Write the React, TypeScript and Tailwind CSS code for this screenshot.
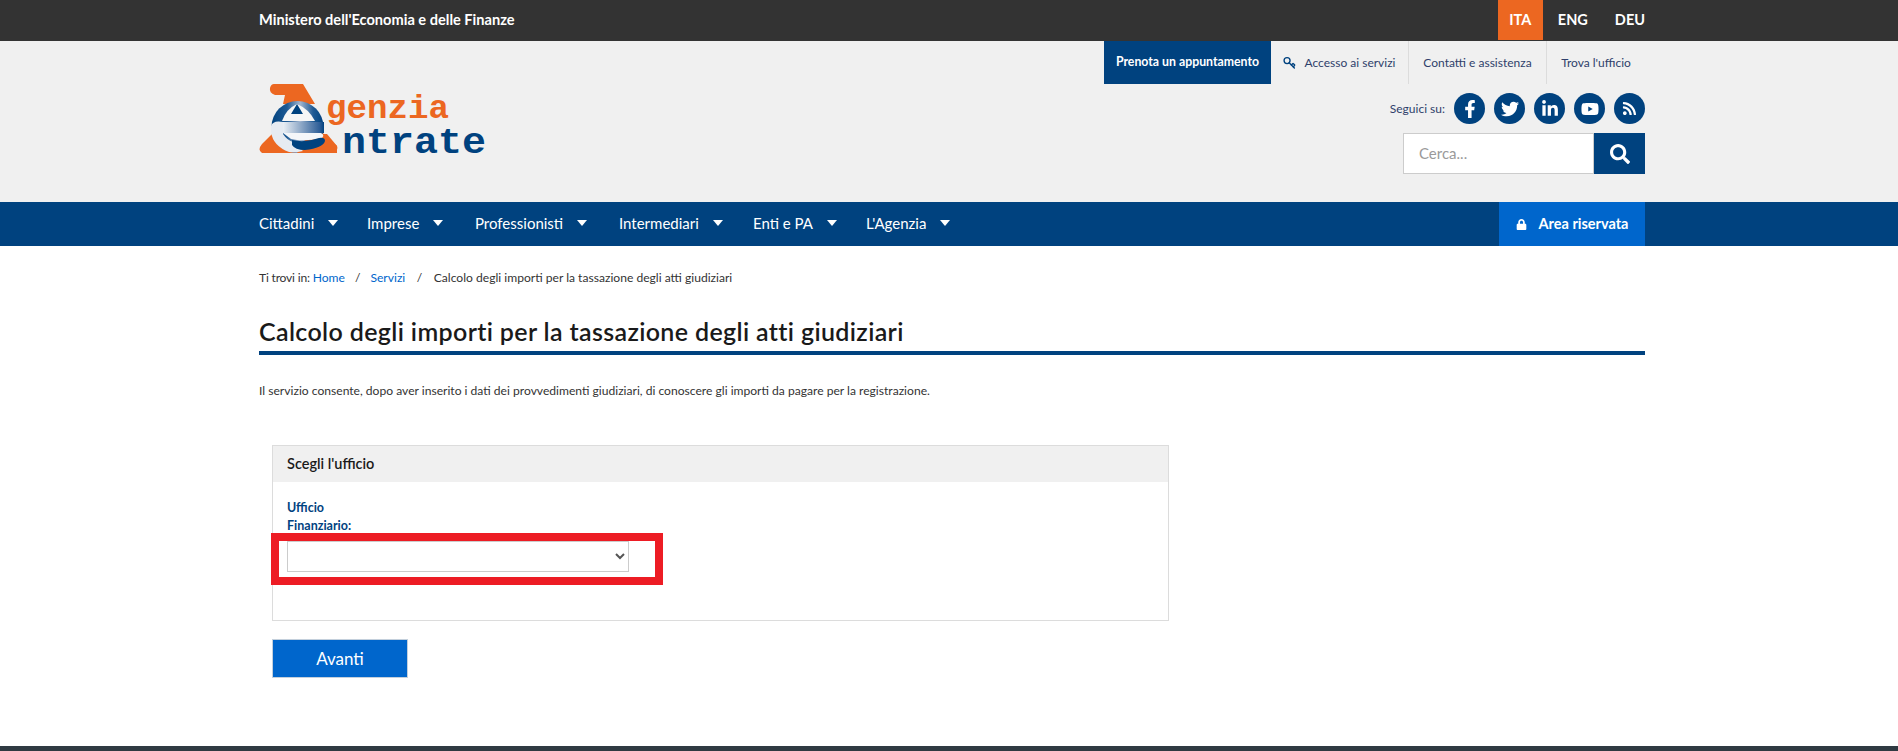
import React from "react";
import { FaFacebookF, FaTwitter, FaLinkedinIn, FaYoutube, FaRss, FaSearch, FaLock } from "react-icons/fa";
import { Key } from "lucide-react";

const Logo = () => (
  <svg width="228" height="80" viewBox="0 0 228 80" className="block">
    <defs>
      <linearGradient id="bar" x1="0" x2="1" y1="0" y2="0">
        <stop offset="0" stopColor="#ffffff" />
        <stop offset="0.9" stopColor="#2f5f98" />
        <stop offset="1" stopColor="#00427f" />
      </linearGradient>
      <linearGradient id="ring" x1="0" x2="1" y1="0" y2="0">
        <stop offset="0" stopColor="#00427f" />
        <stop offset="0.3" stopColor="#1f5a94" />
        <stop offset="0.55" stopColor="#a3b6d0" />
        <stop offset="0.8" stopColor="#1f5a94" />
        <stop offset="1" stopColor="#00427f" />
      </linearGradient>
    </defs>
    <path d="M15 0H44L56 20H24L26 11H16Q10 9 11 4Q12 0 15 0Z" fill="#ec6721" />
    <path d="M14 49L3 60Q-2 66 3 69H72Q80 67 78 62Q76 59 70 58L64 49Z" fill="#ec6721" />
    <circle cx="38.5" cy="43" r="26" fill="url(#ring)" />
    <path d="M50 50H68L78 62V69H38Z" fill="#ec6721" />
    <path d="M23 37Q27 25 38 20Q50 25 56 37Z" fill="#f6f6f6" />
    <path d="M38 20L44 30H32Z" fill="#00427f" />
    <path d="M20 38H65V49H20Z" fill="url(#bar)" />
    <path d="M12 42Q14 36 24 38V50Q28 56 34 58L44 67Q36 69 30 68Q14 62 12 48Z" fill="#e6ebf2" />
    <path d="M24 49H62Q66 51 63 54Q46 58 32 55Z" fill="#f4f6f9" />
    <path d="M33 56Q46 59 60 54Q66 53 66 57Q64 64 46 66Q36 66 33 61Z" fill="#00427f" />
    <text x="67" y="34" textLength="123" lengthAdjust="spacingAndGlyphs" fontFamily="'Liberation Mono', monospace" fontWeight="700" fontSize="33" fill="#ec6721">genzia</text>
    <text x="83" y="69" textLength="144" lengthAdjust="spacingAndGlyphs" fontFamily="'Liberation Mono', monospace" fontWeight="700" fontSize="36" fill="#00427f">ntrate</text>
  </svg>
);

const Social = ({ children }: { children: React.ReactNode }) => (
  <span className="flex h-[31px] w-[31px] items-center justify-center rounded-full bg-[#00427f] text-[18px] text-white">{children}</span>
);

const NavItem = ({ label, w }: { label: string; w: string }) => (
  <span className={`flex items-center text-[15px] leading-[20px] text-white ${w}`}>
    {label}
    <span className="ml-[14px] h-0 w-0 border-x-[5px] border-t-[6px] border-x-transparent border-t-white" />
  </span>
);

export default function App() {
  return (
    <div className="flex min-h-[751px] flex-col bg-white font-['Lato','Liberation_Sans',sans-serif] text-[#1a1a1a]">
      <div className="h-[41px] bg-[#333333]">
        <div className="ml-[259px] flex h-full w-[1386px] items-start justify-between">
          <span className="pt-[11px] text-[14.6px] font-bold leading-[18px] text-white">Ministero dell'Economia e delle Finanze</span>
          <div className="flex items-start text-[14.5px] font-bold text-white">
            <span className="flex h-[40px] w-[45px] items-center justify-center bg-[#ec6721]">ITA</span>
            <span className="flex h-[40px] items-center pl-[15px]">ENG</span>
            <span className="flex h-[40px] items-center pl-[27px]">DEU</span>
          </div>
        </div>
      </div>

      <div className="h-[161px] bg-[#f0f0f0]">
        <div className="ml-[259px] flex h-full w-[1386px] justify-between">
          <div className="pt-[43px]"><Logo /></div>
          <div className="flex flex-col items-end">
            <div className="flex h-[43px] items-stretch text-[12px] text-[#2f3f6b]">
              <span className="flex w-[167px] items-center justify-center bg-[#00427f] text-[12.3px] font-bold text-white">Prenota un appuntamento</span>
              <span className="flex w-[138px] items-center justify-center gap-[8px] border-r border-[#dcdcdc]">
                <Key size={13} strokeWidth={2.5} className="-scale-y-100 text-[#00427f]" />Accesso ai servizi
              </span>
              <span className="flex w-[138px] items-center justify-center border-r border-[#dcdcdc]">Contatti e assistenza</span>
              <span className="flex w-[98px] items-center justify-center">Trova l'ufficio</span>
            </div>
            <div className="mt-[9px] flex items-center gap-[9px]">
              <span className="text-[12px] text-[#2f3f6b]">Seguici su:</span>
              <Social><FaFacebookF /></Social>
              <Social><FaTwitter /></Social>
              <Social><FaLinkedinIn /></Social>
              <Social><FaYoutube /></Social>
              <Social><FaRss className="text-[15px]" /></Social>
            </div>
            <div className="mt-[9px] flex h-[41px]">
              <div className="flex w-[191px] items-center border border-[#cccccc] bg-white pl-[15px] text-[15px] text-[#9a9a9a]">Cerca...</div>
              <span className="flex w-[51px] items-center justify-center bg-[#00427f] text-[20px] text-white"><FaSearch /></span>
            </div>
          </div>
        </div>
      </div>

      <div className="h-[44px] bg-[#00427f]">
        <div className="ml-[259px] flex h-full w-[1386px] items-start justify-between">
          <div className="flex items-center pt-[11px]">
            <NavItem label="Cittadini" w="w-[108px]" />
            <NavItem label="Imprese" w="w-[108px]" />
            <NavItem label="Professionisti" w="w-[144px]" />
            <NavItem label="Intermediari" w="w-[134px]" />
            <NavItem label="Enti e PA" w="w-[113px]" />
            <NavItem label="L'Agenzia" w="w-[100px]" />
          </div>
          <span className="flex h-full w-[146px] items-center justify-center gap-[12px] bg-[#0066cc] text-[14.5px] font-bold text-white">
            <FaLock className="text-[11px]" />Area riservata
          </span>
        </div>
      </div>

      <main className="ml-[259px] w-[1386px] grow">
        <p className="mt-[24px] text-[12.1px] leading-[16px] text-[#333]">
          <span className="tracking-[-0.2px]">Ti trovi in: </span><span className="text-[#0066cc]">Home</span>
          <span className="mx-[10px]">/</span>
          <span className="text-[#0066cc]">Servizi</span>
          <span className="mx-[11.5px]">/</span>
          Calcolo degli importi per la tassazione degli atti giudiziari
        </p>
        <h1 className="mt-[28px] border-b-4 border-[#00427f] pb-[3px] text-[25px] font-semibold leading-[34px] tracking-[0.36px] text-[#1a1a1a]">Calcolo degli importi per la tassazione degli atti giudiziari</h1>
        <p className="mt-[28px] text-[12.1px] leading-[16px] text-[#333]">Il servizio consente, dopo aver inserito i dati dei provvedimenti giudiziari, di conoscere gli importi da pagare per la registrazione.</p>

        <section className="relative ml-[13px] mt-[46px] h-[176px] w-[897px] border border-[#dcdcdc]">
          <h2 className="flex h-[36px] items-center bg-[#f0f0f0] pl-[14px] text-[14.5px] font-semibold leading-none text-[#1a1a1a]">Scegli l'ufficio</h2>
          <div className="pl-[14px] pt-[17px]">
            <label className="block w-[80px] text-[12.5px] font-bold leading-[18px] text-[#00427f]">Ufficio Finanziario:</label>
            <select aria-label="Ufficio Finanziario" className="mt-[6px] block h-[31px] w-[342px] border border-[#cccccc] bg-white text-[#555]" />
          </div>
          <div className="absolute left-[-2px] top-[87px] h-[52px] w-[392px] border-[8px] border-[#ed1c24]" />
        </section>

        <button className="ml-[13px] mt-[18px] block h-[39px] w-[136px] border border-[#c4d0dc] bg-[#0066cc] text-[17px] text-white">Avanti</button>
      </main>

      <div className="h-[5px] bg-[#2f3a42]" />
    </div>
  );
}
